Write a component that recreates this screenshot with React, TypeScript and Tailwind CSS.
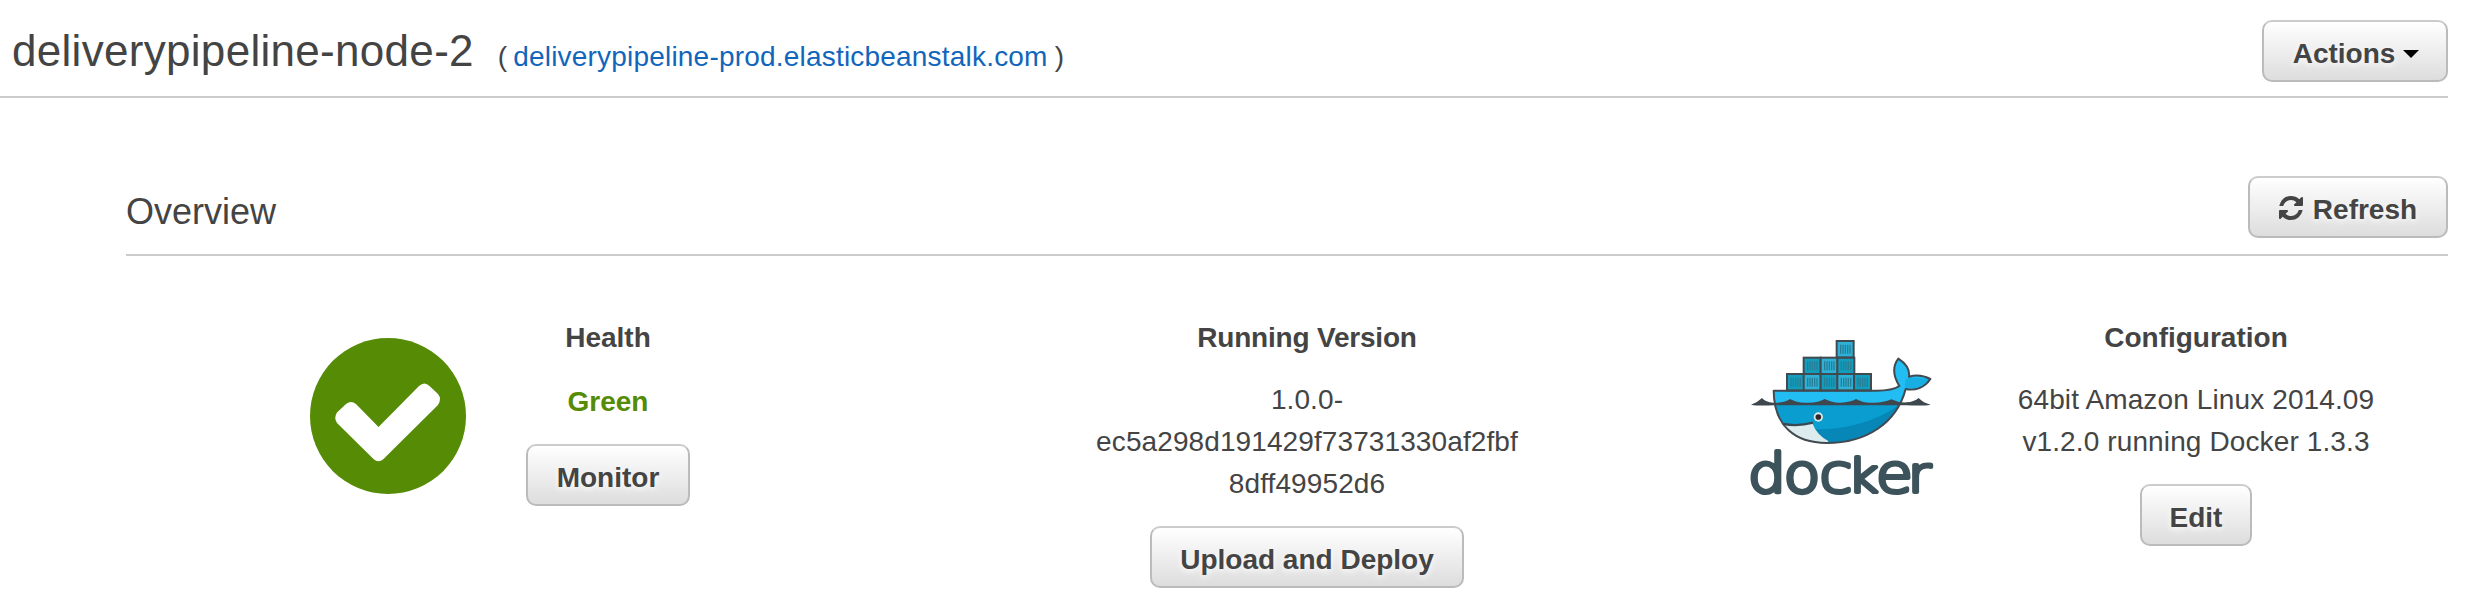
import React from "react";

function Button({ children, className = "" }: { children: React.ReactNode; className?: string }) {
  return (
    <button
      className={`flex h-[62px] shrink-0 items-center justify-center rounded-[10px] border-2 border-[#bbb] border-t-[#ccc] bg-linear-to-b from-white to-[#ddd] pt-[6px] text-[28px] leading-none font-bold whitespace-nowrap text-[#444] [text-shadow:0_2px_6px_#fff] ${className}`}
    >
      {children}
    </button>
  );
}

function RefreshIcon() {
  return (
    <svg viewBox="0 0 1536 1536" className="mt-[-4px] mr-[10px] h-6 w-6" fill="#444">
      <path d="M1511 928q0 5-1 7-64 268-268 434.500T764 1536q-146 0-282.500-55T238 1324l-129 129q-19 19-45 19t-45-19-19-45V960q0-26 19-45t45-19h448q26 0 45 19t19 45-19 45l-137 137q71 66 161 102t187 36q134 0 250-65t186-179q11-17 53-117 8-23 30-23h192q13 0 22.500 9.500t9.500 22.500zm25-800v448q0 26-19 45t-45 19h-448q-26 0-45-19t-19-45 19-45l138-138Q969 256 768 256q-134 0-250 65T332 500q-11 17-53 117-8 23-30 23H50q-13 0-22.500-9.500T18 608v-7q65-268 270-434.500T768 0q146 0 284 55.500T1297 212l130-129q19-19 45-19t45 19 19 45z" />
    </svg>
  );
}

const crates = [
  [170, 161, 0], [220, 161, 1], [271, 161, 0], [321, 161, 1], [371, 161, 0],
  [220, 112, 0], [271, 112, 1], [321, 112, 0], [319, 62, 1],
];

const hull =
  "M131 212H440Q488 212 508 198C492 172 485 142 505 116C528 131 540 148 537 170C560 164 582 167 601 177C584 203 556 213 527 207C500 309 410 369 290 369C195 369 132 318 131 212Z";

function DockerLogo() {
  return (
    <svg viewBox="60 60 546 465" className="h-[155px] w-[182px] overflow-visible">
      <defs>
        <clipPath id="hull">
          <path d={hull} />
        </clipPath>
      </defs>
      <g clipPath="url(#hull)">
        <rect x="120" y="100" width="490" height="280" fill="#22bdf2" />
        <path d="M120 251H530V380H120Z" fill="#0a9dd0" />
        <path d="M252 328C350 330 450 300 510 251H530V380H290Z" fill="#0786b8" />
        <path d="M160 313Q205 320 247 310Q260 345 296 364L280 375Q190 370 155 313Z" fill="#dcebed" />
        <path d="M527 205Q520 185 535 172L601 177L590 210Z" fill="#18aee4" />
      </g>
      <path d={hull} fill="none" stroke="#414a50" strokeWidth="6" strokeLinejoin="round" />
      <path d="M160 312Q205 320 249 308" fill="none" stroke="#374a52" strokeWidth="7" />
      <path d="M63 254Q82 248 96 234Q107 247 130 248Q162 249 180 237Q200 249 230 248Q265 249 284 237Q307 249 332 248Q362 247 378 237Q398 249 424 248Q460 249 484 238Q505 249 530 247Q552 246 566 234Q580 249 602 254Q580 258 530 256H130Q82 258 63 254Z" fill="#3d474d" />
      {crates.map(([x, y, light]) => (
        <g key={`${x}-${y}`}>
          <rect x={x + 1} y={y + 1} width="51" height="49" fill={light ? "#2fb0d6" : "#129dbd"} stroke="#414a50" strokeWidth="6" />
          <path d={`M${x + 13} ${y + 12}v27m7-27v27m7-27v27m7-27v27m7-27v27`} stroke="#267f99" strokeWidth="4" />
        </g>
      ))}
      <circle cx="265" cy="291" r="14" fill="#d8e7ea" />
      <circle cx="265" cy="291" r="8.500" fill="#30262a" />
      <text
        transform="scale(1.12 1)"
        x="48 144 240 316 391 477"
        y="515"
        fontSize="160"
        fill="#3d535c"
        stroke="#3d535c"
        strokeWidth="12"
        strokeLinejoin="round"
        className="font-['DejaVu_Sans_Light','DejaVu_Sans'] font-extralight"
      >
        doc<tspan fontSize="140">k</tspan>e<tspan fontSize="150">r</tspan>
      </text>
    </svg>
  );
}

export default function App() {
  return (
    <div className="h-[608px] w-[2466px] overflow-hidden bg-white pr-[18px] font-['Liberation_Sans',Arial,sans-serif] text-[28px] leading-[42px] text-[#444]">
      <header className="flex h-[98px] items-start justify-between border-b-2 border-[#ccc] pt-5 pl-3">
        <div className="flex items-baseline pt-[6px] leading-[50px] whitespace-nowrap">
          <h1 className="text-[44px] leading-[50px] tracking-[0.3px]">deliverypipeline-node-2</h1>
          <span className="ml-6">(</span>
          <a className="ml-[6px] tracking-[0.2px] text-[#1166bb]">deliverypipeline-prod.elasticbeanstalk.com</a>
          <span className="ml-[7px]">)</span>
        </div>
        <Button className="w-[186px] pl-[2px]">
          Actions
          <svg viewBox="0 0 16 8" className="mt-[-1px] ml-[8px] h-2 w-4"><path d="M0 0h16L8 8z" fill="#000" /></svg>
        </Button>
      </header>
      <section className="pl-[126px]">
        <div className="flex h-[158px] items-start justify-between border-b-2 border-[#ccc] pt-[78px]">
          <h2 className="pt-[15px] text-[36px] leading-[42px]">Overview</h2>
          <Button className="w-[200px]"><RefreshIcon />Refresh</Button>
        </div>
        <div className="flex items-start pt-[61px]">
          <svg viewBox="0 0 156 156" className="mt-[21px] ml-[184px] h-[156px] w-[156px]">
            <circle cx="78" cy="78" r="78" fill="#558b05" />
            <path d="M27 74.500L36 66Q41 62 46 66L68.500 89L109 48Q114.500 43 119.500 48L128 56Q132 61 128 67L73.500 121Q68.500 125.500 63.500 121L27 85Q23.500 80 27 74.500Z" fill="#fff" />
          </svg>
          <div className="ml-[60px] flex w-[164px] flex-col items-center">
            <h3 className="font-bold">Health</h3>
            <p className="mt-[22px] font-bold text-[#558b05]">Green</p>
            <Button className="mt-[21px] w-full">Monitor</Button>
          </div>
          <div className="ml-[397px] flex w-[440px] flex-col items-center">
            <h3 className="font-bold tracking-[-0.2px]">Running Version</h3>
            <p className="mt-5 w-[440px] text-center tracking-[0.1px] whitespace-nowrap">1.0.0-<br />ec5a298d191429f73731330af2fbf<br />8dff49952d6</p>
            <Button className="mt-[21px] w-[314px]">Upload and Deploy</Button>
          </div>
          <div className="mt-[23px] ml-[223px]"><DockerLogo /></div>
          <div className="ml-[64px] flex w-[400px] flex-col items-center">
            <h3 className="font-bold">Configuration</h3>
            <p className="mt-5 text-center tracking-[0.12px] whitespace-nowrap">64bit Amazon Linux 2014.09<br />v1.2.0 running Docker 1.3.3</p>
            <Button className="mt-[21px] w-[112px]">Edit</Button>
          </div>
        </div>
      </section>
    </div>
  );
}
